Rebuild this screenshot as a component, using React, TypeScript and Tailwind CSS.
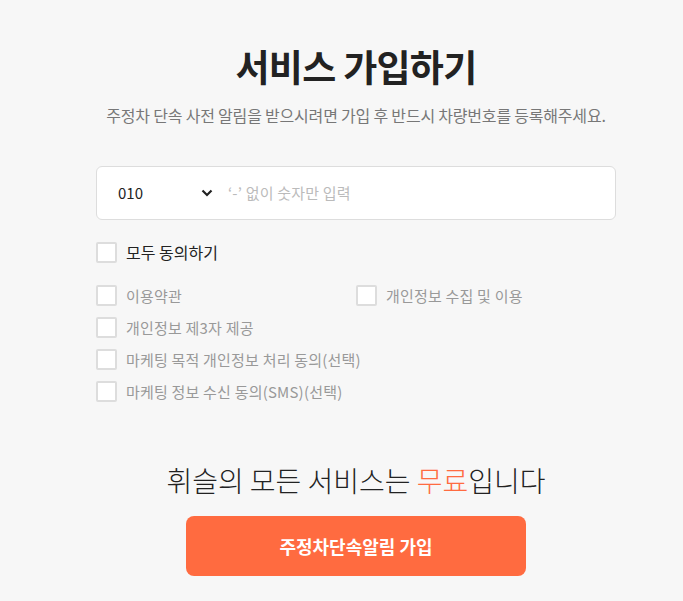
import React from "react";

const font = { fontFamily: '"Noto Sans CJK KR", "Noto Sans", sans-serif' };

function Box() {
  return <span className="w-[21px] h-[21px] shrink-0 bg-white border-2 border-[#dddddd] rounded-[2px]" />;
}

function Item({ label }: { label: string }) {
  return (
    <label className="flex items-center gap-[9px] h-[22px]">
      <Box />
      <span className="text-[15px] text-[#999999] leading-none tracking-[0.2px]">{label}</span>
    </label>
  );
}

export default function App() {
  return (
    <div className="min-h-[601px] bg-[#f7f7f7]" style={font}>
      <div className="ml-[96px] w-[520px] pt-[40px] flex flex-col">
        <h1 className="text-center text-[37px] font-bold text-[#222222] leading-[52px] tracking-[-0.7px]">서비스 가입하기</h1>
        <p className="text-center text-[16px] text-[#777777] mt-[13px] leading-[20px] tracking-[-0.2px]">
          주정차 단속 사전 알림을 받으시려면 가입 후 반드시 차량번호를 등록해주세요.
        </p>
        <div className="mt-[41px] h-[54px] bg-white border border-[#dddddd] rounded-[6px] flex items-center">
          <div className="w-[131px] pl-[21px] pr-[15px] flex items-center justify-between">
            <span className="text-[15px] text-[#222222]">010</span>
            <svg width="12" height="8" viewBox="0 0 12 8">
              <path d="M1.5 1.5 L6 6 L10.5 1.5" fill="none" stroke="#222" strokeWidth="2.2" />
            </svg>
          </div>
          <span className="text-[15px] text-[#bbbbbb] tracking-[0.2px]">‘-’ 없이 숫자만 입력</span>
        </div>
        <label className="mt-[21px] flex items-center gap-[9px] h-[22px]">
          <Box />
          <span className="text-[16px] text-[#222222] font-normal tracking-[0px]">모두 동의하기</span>
        </label>
        <div className="mt-[21px] grid grid-cols-2 gap-y-[10px] w-[520px]">
          <Item label="이용약관" />
          <Item label="개인정보 수집 및 이용" />
          <div className="col-span-2"><Item label="개인정보 제3자 제공" /></div>
          <div className="col-span-2"><Item label="마케팅 목적 개인정보 처리 동의(선택)" /></div>
          <div className="col-span-2"><Item label="마케팅 정보 수신 동의(SMS)(선택)" /></div>
        </div>
        <p className="mt-[58px] text-center text-[28px] font-light text-[#222222] leading-[40px]">
          휘슬의 모든 서비스는 <span className="text-[#ff6b40]">무료</span>입니다
        </p>
        <button className="mt-[16px] self-center w-[340px] h-[60px] bg-[#ff6b40] rounded-[8px] text-white text-[18px] font-bold">
          주정차단속알림 가입
        </button>
      </div>
    </div>
  );
}
